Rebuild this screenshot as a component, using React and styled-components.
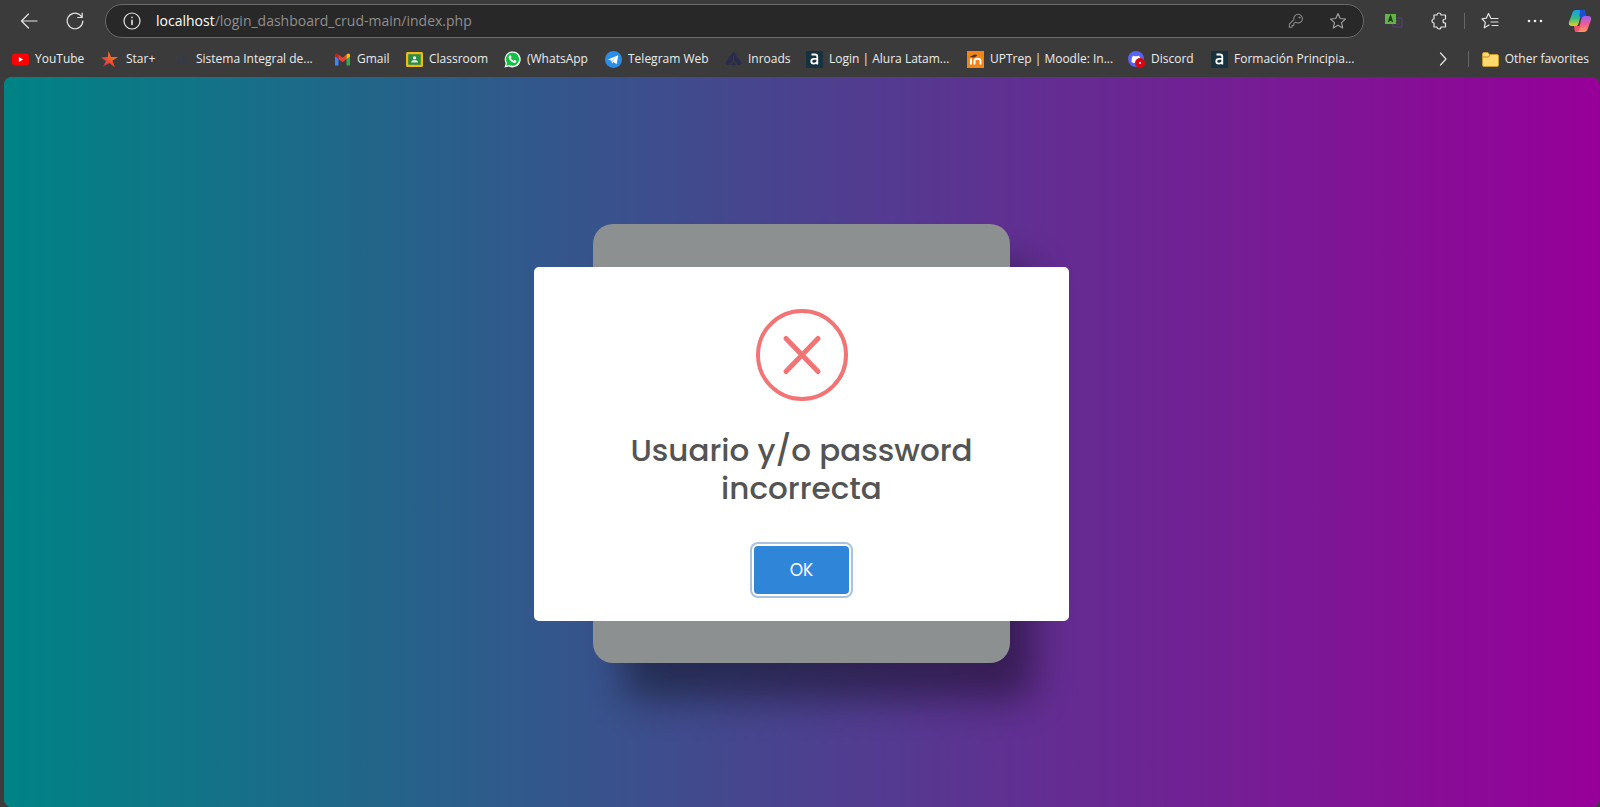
import React from 'react';
import styled, { createGlobalStyle } from 'styled-components';

const Global = createGlobalStyle`
  * { box-sizing: border-box; }
  body { margin: 0; background: #3b3b3b; font-family: "Segoe UI", "Open Sans", sans-serif; }
  button { font: inherit; color: inherit; background: none; border: 0; padding: 0; cursor: pointer; }
`;

const Window = styled.div`
  min-height: 100vh;
  display: flex;
  flex-direction: column;
`;

const Toolbar = styled.header`
  display: flex;
  align-items: center;
  padding: 4px 8px 3px 17px;
`;

const IconButton = styled.button`
  display: grid;
  place-items: center;
  flex: none;
  width: 24px;
  height: 26px;
`;

const NavButtons = styled.nav`
  display: flex;
  gap: 22px;
  margin-right: 18px;
`;

const AddressBar = styled.div`
  flex: 1;
  display: flex;
  align-items: center;
  height: 34px;
  padding: 0 13px 0 14px;
  border: 1px solid #6a6a6a;
  border-radius: 17px;
  background: #282828;
`;

const Url = styled.div`
  flex: 1;
  margin-left: 12px;
  font-size: 14px;
  line-height: 24px;
  color: #8f8f8f;
  b { font-weight: 400; color: #ffffff; }
`;

const AddressActions = styled.div`
  display: flex;
  gap: 18px;
`;

const Tools = styled.div`
  display: flex;
  align-items: center;
  gap: 21px;
  margin-left: 18px;
`;

const DividedPair = styled.div`
  display: flex;
  align-items: center;
`;

const Divider = styled.span`
  width: 1px;
  height: 16px;
  background: #666666;
  margin: 0 13px;
`;

const BookmarksBar = styled.nav`
  display: flex;
  align-items: center;
  height: 36px;
  padding: 0 11px 0 12px;
  font-size: 12px;
  line-height: 18px;
  color: #ececec;
`;

const Bookmark = styled.a`
  display: flex;
  align-items: center;
  flex: none;
  gap: ${(p) => p.$gap || 6}px;
  width: ${(p) => (p.$width ? p.$width + 'px' : 'auto')};
  color: inherit;
  text-decoration: none;
  white-space: nowrap;
  svg { flex: none; }
`;

const Spacer = styled.span`
  flex: 1;
`;

const Page = styled.main`
  position: relative;
  flex: 1;
  display: grid;
  place-items: center;
  padding-top: 3px;
  margin: 0 1px 0 4px;
  border-radius: 8px;
  overflow: hidden;
  background: linear-gradient(to right, #00dbde, #fc00ff);
`;

const LoginCard = styled.section`
  width: 417px;
  height: 439px;
  border-radius: 20px;
  background: #ecf0f1;
  box-shadow: 27px 39px 38px -3px rgba(0, 0, 0, 0.42);
`;

const Overlay = styled.div`
  position: absolute;
  inset: 0;
  display: grid;
  place-items: center;
  padding-top: 3px;
  background: rgba(0, 0, 0, 0.4);
`;

const Dialog = styled.div`
  display: flex;
  flex-direction: column;
  align-items: center;
  width: 535px;
  padding: 42px 20px 27px;
  border-radius: 5px;
  background: #ffffff;
  font-family: Poppins, Inter, sans-serif;
`;

const Title = styled.h2`
  max-width: 400px;
  margin: 30px 0 39px;
  font-size: 31px;
  line-height: 38px;
  font-weight: 500;
  text-align: center;
  color: #545454;
`;

const OkButton = styled.button`
  && {
    width: 95px;
    height: 48px;
    border-radius: 4px;
    background: #2f86d8;
    color: #ffffff;
    font-size: 17px;
    box-shadow: 0 0 0 2px #ffffff, 0 0 0 4px #a9c3df;
    outline: none;
  }
`;

const Line = ({ size = 18, children, color = '#e4e4e4', width = 1.2 }) => (
  <svg width={size} height={size} viewBox="0 0 18 18" fill="none" stroke={color} strokeWidth={width} strokeLinecap="round" strokeLinejoin="round" aria-hidden="true">
    {children}
  </svg>
);

const Fav = ({ children }) => (
  <svg width="17" height="17" viewBox="0 0 17 17" aria-hidden="true">{children}</svg>
);

const AluraIcon = () => (
  <Fav>
    <rect width="17" height="17" fill="#16323f" />
    <path d="M5.500 3.500h3.500q2.300 0 2.300 2.300v7.700M11 7.800H8Q5.300 7.800 5.300 10.200T7.800 12.600Q10 12.600 11 11" fill="none" stroke="#fff" strokeWidth="1.800" />
  </Fav>
);

const bookmarks = [
  { label: 'YouTube', width: 89, icon: <Fav><rect y="2.500" width="17" height="12" rx="3" fill="#f00" /><path d="M6.800 6v5l4.400-2.500z" fill="#fff" /></Fav> },
  {
    label: 'Star+', width: 72, gap: 8,
    icon: (
      <Fav>
        <defs><linearGradient id="star" x1="1" y1="0" x2="0" y2="1"><stop offset="0" stopColor="#f4a024" /><stop offset=".5" stopColor="#ee5a2c" /><stop offset="1" stopColor="#c8206c" /></linearGradient></defs>
        <path d="M7.500 0l2.500 6 7 .2-5.600 3.300 2.600 7-5.500-4.500L2 15.500l3-5.500L0 6.500l6.800-.4z" fill="url(#star)" />
      </Fav>
    ),
  },
  { label: 'Sistema Integral de...', width: 161, icon: <Fav><path d="M2 12h3V8M7 13V6l3-2v9M12 12V7l3 5" fill="none" stroke="#333b4c" strokeWidth="1.200" /></Fav> },
  {
    label: 'Gmail', width: 72,
    icon: (
      <Fav>
        <path d="M1 4v10.500h3.500V6z" fill="#4285f4" /><path d="M16 4v10.500h-3.500V6z" fill="#34a853" />
        <path d="M4.500 3.500l4 3.200 4-3.200v4.600l-4 3.200-4-3.200z" fill="#ea4335" /><path d="M1 4q0-1.800 2-1.500l1.500 1v4.600L1 5.500z" fill="#c5221f" /><path d="M16 4q0-1.800-2-1.500l-1.500 1v4.600L16 5.500z" fill="#fbbc04" />
      </Fav>
    ),
  },
  { label: 'Classroom', width: 98, icon: <Fav><rect y="1" width="17" height="15" rx="1.500" fill="#f2b91d" /><rect x="2.200" y="3.200" width="12.600" height="10.600" fill="#2e8b45" /><circle cx="8.500" cy="6.800" r="1.600" fill="#fff" /><path d="M5 11.600q0-2.600 3.500-2.600T12 11.600z" fill="#d8f0d8" /></Fav> },
  { label: '(WhatsApp', width: 101, icon: <Fav><path d="M.5 16.500l1.200-4.200A8 8 0 1 1 4.800 15.400z" fill="#fff" /><path d="M2.200 14.800l.8-2.800A6.600 6.600 0 1 1 5.200 14z" fill="#12c143" /><path d="M5.500 4.500q1-.8 1.500.2l.6 1.500-.8 1.100q.9 1.700 2.700 2.500l1-.9 1.800.9q.3 1.300-1 2-1.500.6-4-1.300Q4.500 8 4.700 6.200q.1-1 .8-1.700z" fill="#fff" /></Fav> },
  { label: 'Telegram Web', width: 120, icon: <Fav><circle cx="8.500" cy="8.500" r="8.500" fill="#2b8fe9" /><path d="M3 8.400l10.300-4.200-1.700 9-3-2.300-1.600 1.600-.4-2.700z" fill="#fff" /><path d="M6.600 9.800l5-4.200-3.900 5-.7 1.900z" fill="#c3daf0" /></Fav> },
  { label: 'Inroads', width: 81, icon: <Fav><path d="M8.500 1q1.500 1 2.500 3l5.500 7.500q0 2.500-2.500 2.500H3Q.5 14 .5 11.500L6 4q1-2 2.500-3z" fill="#282b4c" /><path d="M8.500 5v5L5 13.500M8.500 10l3.500 3.500" fill="none" stroke="#3b3b3b" strokeWidth="1.400" /></Fav> },
  { label: 'Login | Alura Latam...', width: 161, icon: <AluraIcon /> },
  { label: 'UPTrep | Moodle: In...', width: 161, icon: <Fav><rect width="17" height="17" fill="#f28418" /><path d="M4 7.500v6M7.500 13.500V10q0-2.300 3-2.300t3 2.300v3.500" fill="none" stroke="#fff" strokeWidth="2" /><path d="M2.500 6l5-2.500 3 .5-3 2.500z" fill="#4b3020" /></Fav> },
  { label: 'Discord', width: 83, icon: <Fav><circle cx="8" cy="8" r="8" fill="#5865f2" /><path d="M3.500 11Q3 7 5 4.800l2 .5h2l2-.5Q13 7 12.500 11l-2 1H5.500z" fill="#fff" /><circle cx="12" cy="12" r="5" fill="#dc0612" /><circle cx="12" cy="12" r="1" fill="#fff" /></Fav> },
  { label: 'Formación Principia...', width: 150, icon: <AluraIcon /> },
];

const starPath = 'M9 1.500l2.200 5 5.300.5-4 3.600 1.200 5.400L9 13.200 4.300 16l1.200-5.400-4-3.600 5.300-.5z';

export default function App() {
  return (
    <Window>
      <Global />
      <Toolbar>
        <NavButtons>
          <IconButton aria-label="Back"><Line><path d="M17 9H1.500M8.500 2L1.500 9l7 7" /></Line></IconButton>
          <IconButton aria-label="Refresh"><Line><path d="M16.800 9A7.800 7.800 0 1 1 13.800 2.800L16 5M16.200 1v4.500h-4.500" /></Line></IconButton>
        </NavButtons>
        <AddressBar>
          <IconButton aria-label="Site information"><Line><circle cx="9" cy="9" r="8" /><path d="M9 8.200v4.300M9 5.400v.2" strokeWidth="1.600" /></Line></IconButton>
          <Url><b>localhost</b>/login_dashboard_crud-main/index.php</Url>
          <AddressActions>
            <IconButton aria-label="Saved passwords"><Line size={16} color="#8b8b8b"><path d="M8.500 10.300A4.900 4.900 0 1 0 6.600 7.400L1.500 12.600V16h3v-2h2v-2z" /><circle cx="13" cy="5" r=".6" /></Line></IconButton>
            <IconButton aria-label="Add to favorites"><Line color="#9b9b9b"><path d={starPath} /></Line></IconButton>
          </AddressActions>
        </AddressBar>
        <Tools>
          <IconButton aria-label="Translate">
            <svg width="18" height="16" viewBox="0 0 18 16" aria-hidden="true">
              <path d="M11 5h6v9H8v-3" fill="none" stroke="#54437a" /><path d="M11 8h4M11 11h4" stroke="#4c4564" />
              <path d="M0 1h11v10H0z" fill="#62b545" /><path d="M3.500 9l2-6 2 6M4.200 7h2.600" fill="none" stroke="#1d3316" strokeWidth="1.300" />
            </svg>
          </IconButton>
          <DividedPair>
            <IconButton aria-label="Extensions"><Line><path d="M4 3h3a2 2 0 0 1 4 0h4.500v4H15a2 2 0 0 0 0 4h.5v4H11a2 2 0 0 1-4 0H4v-4a2 2 0 0 1 0-4z" /></Line></IconButton>
            <Divider />
            <IconButton aria-label="Favorites"><Line><path d="M10 6.500L7.500 1.500 5.300 6.200 1 6.800l3.300 3.500-1 5.500 4.700-2.800M10.500 6.500H17M10 10h7M11 13.500h6" /></Line></IconButton>
          </DividedPair>
          <IconButton aria-label="More"><svg width="16" height="4" viewBox="0 0 16 4" fill="#ececec" aria-hidden="true"><circle cx="2" cy="2" r="1.300" /><circle cx="8" cy="2" r="1.300" /><circle cx="14" cy="2" r="1.300" /></svg></IconButton>
          <IconButton aria-label="Copilot">
            <svg width="24" height="24" viewBox="0 0 24 24" aria-hidden="true">
              <defs>
                <linearGradient id="cpA" x1="0" y1="0" x2="0" y2="1"><stop offset="0" stopColor="#1aa0f0" /><stop offset=".5" stopColor="#2fb98c" /><stop offset="1" stopColor="#e8d020" /></linearGradient>
                <linearGradient id="cpB" x1="0" y1="0" x2="0" y2="1"><stop offset="0" stopColor="#a05cf0" /><stop offset=".5" stopColor="#ee5c92" /><stop offset="1" stopColor="#ff9a58" /></linearGradient>
              </defs>
              <path d="M15 1H8Q5 1 4 5L1 13q-1 4 3 4h4q2 0 3-4l2-8q1-3 4-3Q16.500 1 15 1z" fill="url(#cpA)" />
              <path d="M9 23h7q3 0 4-4l3-8q1-4-3-4h-4q-2 0-3 4l-2 8q-1 3-4 3 .5 1 2 1z" fill="url(#cpB)" />
              <path d="M12 1h3q2 0 2.500 2l.8 4H16q-2 0-3 3l-1.500-3z" fill="#1d4fd0" />
              <path d="M8 17h4.500l-1.500 4q-.5 2-2 2-2 0-2.500-2L6 17z" fill="#f2506a" />
            </svg>
          </IconButton>
        </Tools>
      </Toolbar>
      <BookmarksBar aria-label="Favorites bar">
        {bookmarks.map((b) => (
          <Bookmark key={b.label} href="#" $width={b.width} $gap={b.gap}>{b.icon}{b.label}</Bookmark>
        ))}
        <Spacer />
        <IconButton aria-label="More favorites"><Line><path d="M6.500 3l5.500 6-5.500 6" /></Line></IconButton>
        <Divider />
        <Bookmark href="#">
          <Fav><path d="M.5 3q0-1.500 1.500-1.500h4l1.500 2h7.500q1.500 0 1.500 1.500v9q0 1.500-1.500 1.500H2Q.5 15.500.5 14z" fill="#ffd970" stroke="#c99a25" /><path d="M.5 6h6l1.500-2" fill="none" stroke="#b98a1d" /></Fav>
          Other favorites
        </Bookmark>
      </BookmarksBar>
      <Page>
        <LoginCard />
        <Overlay>
          <Dialog role="dialog" aria-modal="true" aria-labelledby="alert-title">
            <svg width="92" height="92" viewBox="0 0 92 92" fill="none" stroke="#f27474" strokeWidth="4" strokeLinecap="round" aria-hidden="true">
              <circle cx="46" cy="46" r="44" />
              <path d="M30 29.500l32 33M62 29.500l-32 33" strokeWidth="5" />
            </svg>
            <Title id="alert-title">Usuario y/o password incorrecta</Title>
            <OkButton type="button">OK</OkButton>
          </Dialog>
        </Overlay>
      </Page>
    </Window>
  );
}
